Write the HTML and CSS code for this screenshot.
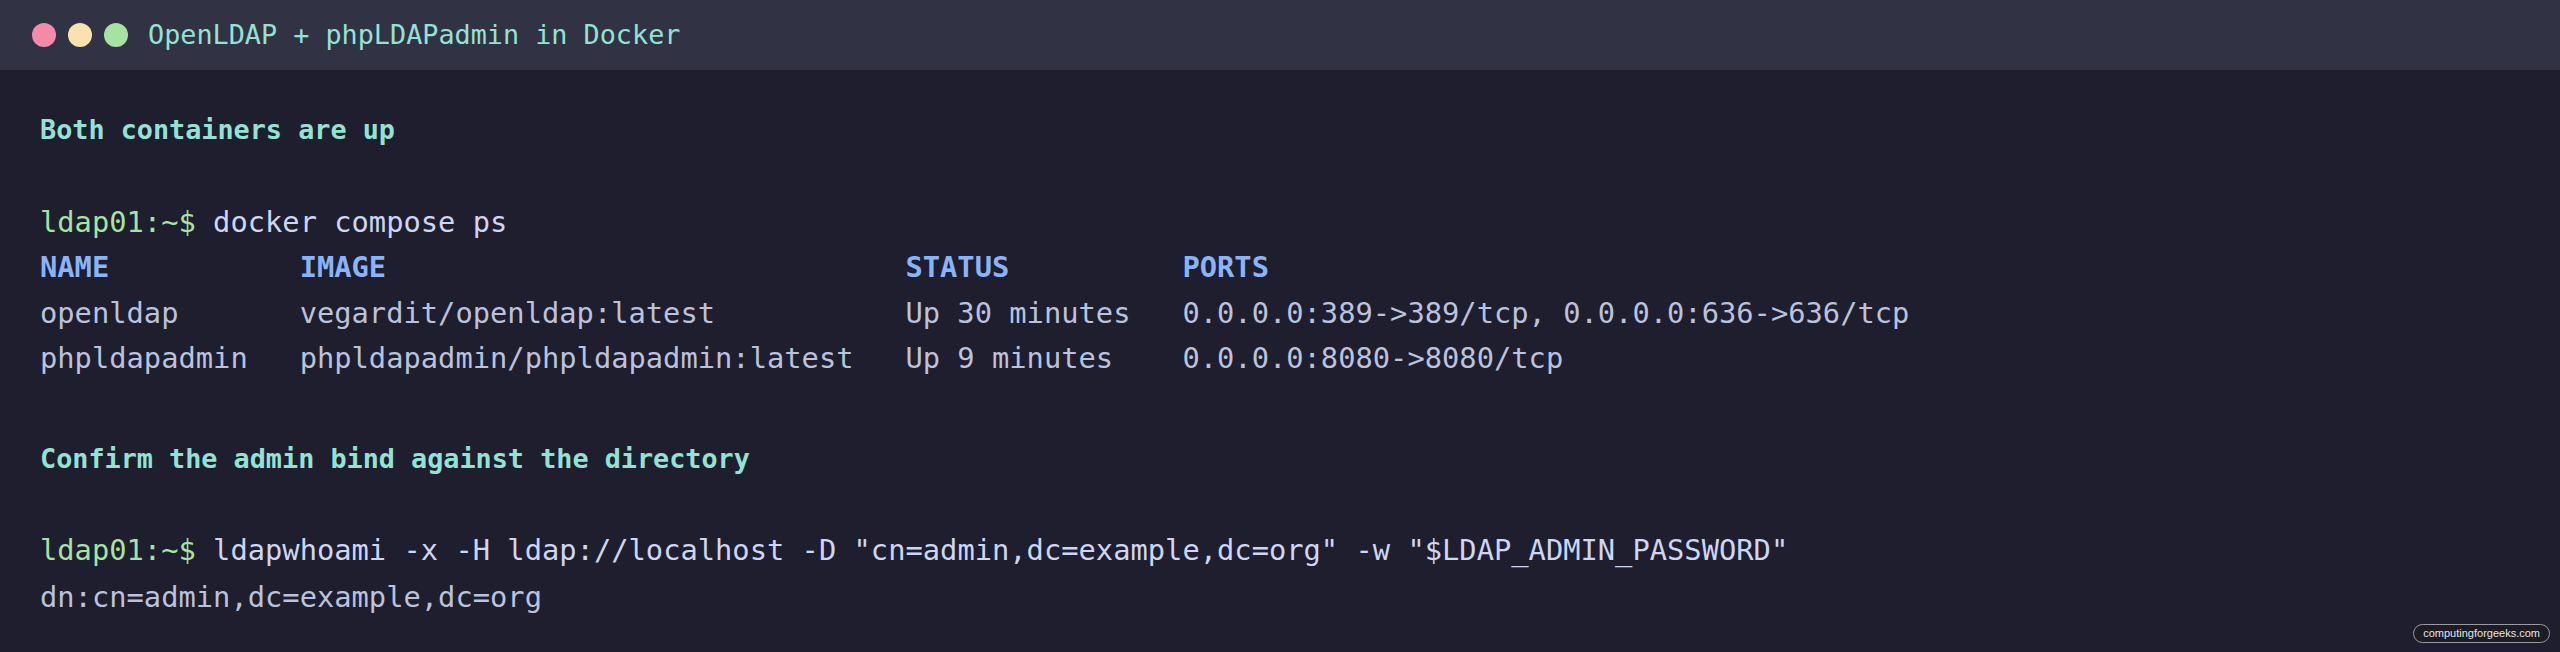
FILE: index.html
```html
<!DOCTYPE html>
<html lang="en">
<head>
<meta charset="utf-8">
<title>OpenLDAP + phpLDAPadmin in Docker</title>
<link rel="stylesheet" href="styles.css">
</head>
<body>
<div class="window">
  <header class="titlebar">
    <div class="lights">
      <span class="light red"></span>
      <span class="light yellow"></span>
      <span class="light green"></span>
    </div>
    <div class="title">OpenLDAP + phpLDAPadmin in Docker</div>
  </header>
  <main class="content">
    <section class="section">
      <div class="heading">Both containers are up</div>
      <div class="term">
        <div class="line"><span class="prompt">ldap01:~$</span> <span class="cmd">docker compose ps</span></div>
        <div class="line head">NAME           IMAGE                              STATUS          PORTS</div>
        <div class="line out">openldap       vegardit/openldap:latest           Up 30 minutes   0.0.0.0:389-&gt;389/tcp, 0.0.0.0:636-&gt;636/tcp</div>
        <div class="line out">phpldapadmin   phpldapadmin/phpldapadmin:latest   Up 9 minutes    0.0.0.0:8080-&gt;8080/tcp</div>
      </div>
    </section>
    <section class="section">
      <div class="heading">Confirm the admin bind against the directory</div>
      <div class="term">
        <div class="line"><span class="prompt">ldap01:~$</span> <span class="cmd">ldapwhoami -x -H ldap://localhost -D "cn=admin,dc=example,dc=org" -w "$LDAP_ADMIN_PASSWORD"</span></div>
        <div class="line out result">dn:cn=admin,dc=example,dc=org</div>
      </div>
    </section>
  </main>
  <div class="watermark">computingforgeeks.com</div>
</div>
</body>
</html>
```
FILE: styles.css
```css
html, body {
  margin: 0;
  padding: 0;
  background: #1e1e2e;
}

.window {
  position: relative;
  width: 2560px;
  height: 652px;
  background: #1e1e2e;
  font-family: "DejaVu Sans Mono", "Liberation Mono", monospace;
  overflow: hidden;
}

.titlebar {
  height: 70px;
  background: #313244;
  display: flex;
  align-items: center;
  padding-left: 32px;
  box-sizing: border-box;
}

.lights {
  display: flex;
  gap: 12px;
  margin-right: 20px;
}

.light {
  width: 24px;
  height: 24px;
  border-radius: 50%;
  display: block;
}

.red { background: #f38ba8; }
.yellow { background: #f9e2af; }
.green { background: #a6e3a1; }

.title {
  color: #94e2d5;
  font-size: 26.8px;
  line-height: 32px;
  white-space: pre;
}

.content {
  padding: 37px 40px 0 40px;
}

.section + .section {
  margin-top: 54px;
}

.heading {
  color: #94e2d5;
  font-weight: bold;
  font-size: 26.8px;
  line-height: 45.5px;
  margin-bottom: 47px;
  white-space: pre;
}

.term {
  font-size: 28.75px;
  line-height: 45.5px;
}

.line {
  white-space: pre;
  color: #cdd6f4;
}

.prompt { color: #a6e3a1; }
.cmd { color: #cdd6f4; }

.head {
  color: #89b4fa;
  font-weight: bold;
}

.out { color: #bac2de; }

.result { margin-top: 1px; }

.watermark {
  position: absolute;
  right: 10px;
  bottom: 9px;
  height: 19px;
  padding: 0 9px;
  box-sizing: border-box;
  border: 1px solid #9a9aa2;
  border-radius: 10px;
  background: #1c1c22;
  color: #e4e4e8;
  font-family: "Liberation Sans", Arial, sans-serif;
  font-size: 11px;
  line-height: 17px;
}
```
